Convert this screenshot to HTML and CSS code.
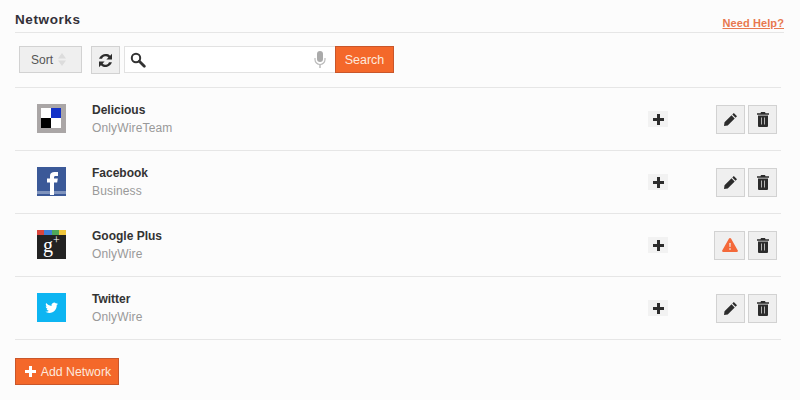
FILE: index.html
```html
<!DOCTYPE html>
<html lang="en">
<head>
  <meta charset="UTF-8">
  <title>Networks</title>
  <link rel="stylesheet" href="styles.css">
</head>
<body>
  <div id="wrapper">
    <div class="page-head">
      <h1>Networks</h1>
      <a class="help" href="#">Need Help?</a>
    </div>

    <div class="toolbar">
      <button class="btn sort">Sort
        <svg class="sort-arrows" width="8" height="13" viewBox="0 0 8 13"><path d="M4 0l4 5.500H0zM4 13L0 7.500h8z"/></svg>
      </button>
      <button class="btn refresh" aria-label="Refresh">
        <svg width="15" height="15" viewBox="0 0 15 15"><path d="M14 .8v5.600H8.400l2-2A3.800 3.800 0 0 0 4 5.800H1.100a6.700 6.700 0 0 1 11-3.100zM1 14.200V8.600h5.600l-2 2A3.800 3.800 0 0 0 11 9.200h2.900a6.700 6.700 0 0 1-11 3.100z"/></svg>
      </button>
      <div class="search">
        <svg class="glass" width="16" height="16" viewBox="0 0 16 16"><circle cx="6" cy="6" r="4.200" fill="none" stroke="#333" stroke-width="2"/><path d="M9.300 9.300l5 5" stroke="#333" stroke-width="2.800" stroke-linecap="round"/></svg>
        <svg class="mic" width="12" height="17" viewBox="0 0 12 17"><rect x="3" y="0" width="6" height="11" rx="3" fill="#aaa"/><path d="M1 7v1.500a5 5 0 0 0 10 0V7" fill="none" stroke="#bbb" stroke-width="1.200"/><path d="M6 13.500V17" stroke="#bbb" stroke-width="1.500"/></svg>
      </div>
      <button class="btn-orange search-btn">Search</button>
    </div>

    <ul class="networks">
      <li class="row">
        <svg class="logo" width="29" height="29" viewBox="0 0 29 29">
          <rect width="29" height="29" fill="#aaa6a6"/>
          <rect x="4" y="4" width="10" height="10" fill="#fff"/>
          <rect x="14" y="4" width="10" height="10" fill="#1432c8"/>
          <rect x="4" y="14" width="10" height="10" fill="#000"/>
          <rect x="14" y="14" width="10" height="10" fill="#fff"/>
        </svg>
        <div class="info">
          <div class="name">Delicious</div>
          <div class="account">OnlyWireTeam</div>
        </div>
        <span class="add"><svg width="11" height="11" viewBox="0 0 11 11"><path d="M4 0h3v4h4v3H7v4H4V7H0V4h4z"/></svg></span>
        <div class="actions">
          <button class="btn square" aria-label="Edit"><svg width="15" height="15" viewBox="0 0 15 15"><path d="M10.800 1l3.200 3.200-1.500 1.500-3.200-3.200zM8.500 3.300l3.200 3.200-7 7L1 14l.5-3.700z"/></svg></button>
          <button class="btn square" aria-label="Delete"><svg width="12" height="15" viewBox="0 0 12 15"><path fill-rule="evenodd" d="M4 0h4l.5 1.300H12v1.500H0V1.300h3.500zM1 3.500h10V14q0 1-1 1H2q-1 0-1-1zM4 5.500v7h.7v-7zM7.300 5.500v7h.7v-7z"/></svg></button>
        </div>
      </li>
      <li class="row">
        <svg class="logo" width="29" height="29" viewBox="0 0 29 29">
          <rect width="29" height="29" fill="#3b5998"/>
          <rect y="24" width="29" height="3" fill="#7f93bd"/>
          <path d="M13 28V15.500h-3V11.500h3V9C13 6 14.800 5 17.500 5H21v4h-2.300c-1.300 0-1.700.6-1.700 1.500v1h3.800l-.6 4H17V28z" fill="#fff"/>
        </svg>
        <div class="info">
          <div class="name">Facebook</div>
          <div class="account">Business</div>
        </div>
        <span class="add"><svg width="11" height="11" viewBox="0 0 11 11"><path d="M4 0h3v4h4v3H7v4H4V7H0V4h4z"/></svg></span>
        <div class="actions">
          <button class="btn square" aria-label="Edit"><svg width="15" height="15" viewBox="0 0 15 15"><path d="M10.800 1l3.200 3.200-1.500 1.500-3.200-3.200zM8.500 3.300l3.200 3.200-7 7L1 14l.5-3.700z"/></svg></button>
          <button class="btn square" aria-label="Delete"><svg width="12" height="15" viewBox="0 0 12 15"><path fill-rule="evenodd" d="M4 0h4l.5 1.300H12v1.500H0V1.300h3.500zM1 3.500h10V14q0 1-1 1H2q-1 0-1-1zM4 5.500v7h.7v-7zM7.300 5.500v7h.7v-7z"/></svg></button>
        </div>
      </li>
      <li class="row">
        <div class="logo gplus">
          <div class="gplus-bar"><i class="c1"></i><i class="c2"></i><i class="c3"></i><i class="c4"></i></div>
          <div class="gplus-text">g<sup>+</sup></div>
        </div>
        <div class="info">
          <div class="name">Google Plus</div>
          <div class="account">OnlyWire</div>
        </div>
        <span class="add"><svg width="11" height="11" viewBox="0 0 11 11"><path d="M4 0h3v4h4v3H7v4H4V7H0V4h4z"/></svg></span>
        <div class="actions">
          <button class="btn square wide" aria-label="Warning"><svg width="16" height="14" viewBox="0 0 16 14"><path fill-rule="evenodd" fill="#f4693a" d="M8 0q.7 0 1 .6l6.800 11.800q.5 1.200-.8 1.600H1q-1.300-.4-.8-1.600L7 .6Q7.300 0 8 0zM7.300 5l.2 4h1l.2-4zM7.300 10.200v1.600h1.400v-1.600z"/></svg></button>
          <button class="btn square" aria-label="Delete"><svg width="12" height="15" viewBox="0 0 12 15"><path fill-rule="evenodd" d="M4 0h4l.5 1.300H12v1.500H0V1.300h3.500zM1 3.500h10V14q0 1-1 1H2q-1 0-1-1zM4 5.500v7h.7v-7zM7.300 5.500v7h.7v-7z"/></svg></button>
        </div>
      </li>
      <li class="row">
        <svg class="logo" width="29" height="29" viewBox="0 0 29 29">
          <rect width="29" height="29" fill="#0db5f2"/>
          <path transform="translate(3.800 3.800) scale(.75)" d="M23 9.300c-.7.300-1.300.5-2 .6.700-.4 1.300-1.100 1.500-1.900-.7.400-1.400.7-2.200.9a3.500 3.500 0 0 0-6 3.200C11.400 12 8.800 10.600 7.100 8.400c-.9 1.600-.4 3.600 1.100 4.600-.6 0-1.100-.2-1.600-.4 0 1.700 1.200 3.100 2.800 3.400-.5.100-1 .2-1.600.1.500 1.400 1.800 2.400 3.300 2.400A7 7 0 0 1 6 20c1.500 1 3.400 1.500 5.300 1.500 6.500 0 10.100-5.400 9.900-10.300.7-.5 1.300-1.100 1.800-1.900z" fill="#fff"/>
        </svg>
        <div class="info">
          <div class="name">Twitter</div>
          <div class="account">OnlyWire</div>
        </div>
        <span class="add"><svg width="11" height="11" viewBox="0 0 11 11"><path d="M4 0h3v4h4v3H7v4H4V7H0V4h4z"/></svg></span>
        <div class="actions">
          <button class="btn square" aria-label="Edit"><svg width="15" height="15" viewBox="0 0 15 15"><path d="M10.800 1l3.200 3.200-1.500 1.500-3.200-3.200zM8.500 3.300l3.200 3.200-7 7L1 14l.5-3.700z"/></svg></button>
          <button class="btn square" aria-label="Delete"><svg width="12" height="15" viewBox="0 0 12 15"><path fill-rule="evenodd" d="M4 0h4l.5 1.300H12v1.500H0V1.300h3.500zM1 3.500h10V14q0 1-1 1H2q-1 0-1-1zM4 5.500v7h.7v-7zM7.300 5.500v7h.7v-7z"/></svg></button>
        </div>
      </li>
    </ul>

    <button class="btn-orange add-network">
      <svg width="11" height="11" viewBox="0 0 11 11"><path d="M4 0h3v4h4v3H7v4H4V7H0V4h4z"/></svg>
      Add Network
    </button>
  </div>
</body>
</html>
```

FILE: styles.css
```css
*, *::before, *::after { box-sizing: border-box; }
html, body {
  margin: 0;
  padding: 0;
  height: 100%;
  font-family: 'Liberation Sans', Arial, sans-serif;
  background: #fcfcfc;
  overflow: hidden;
}
#wrapper {
  height: 100%;
  padding-left: 15px;
  display: flex;
  flex-direction: column;
  align-items: flex-start;
}
.page-head {
  width: 769px;
  height: 33px;
  padding-top: 12px;
  display: flex;
  justify-content: space-between;
  border-bottom: 1px solid #e6e6e6;
}
.page-head h1 {
  margin: 0;
  font-size: 13.500px;
  line-height: 16px;
  font-weight: bold;
  letter-spacing: 0.6px;
  color: #333038;
}
.help {
  margin-top: 4px;
  font-size: 11px;
  line-height: 14px;
  height: 16px;
  font-weight: bold;
  letter-spacing: 0.1px;
  color: #e8784f;
  text-decoration: underline;
}
.toolbar {
  width: 766px;
  height: 55px;
  padding: 13px 0 0 4px;
  display: flex;
  align-items: flex-start;
  border-bottom: 1px solid #e6e6e6;
}
.btn {
  display: flex;
  align-items: center;
  justify-content: center;
  padding: 0;
  background: #efefef;
  border: 1px solid #d2d2d2;
  color: #333;
  font-family: inherit;
}
.btn svg { fill: #2c2c2c; }
.sort {
  width: 63px;
  height: 27px;
  margin-right: 9px;
  padding-right: 4px;
  gap: 5px;
  font-size: 12px;
  color: #555;
}
.btn .sort-arrows { fill: #dcdcdc; }
.refresh {
  width: 29px;
  height: 28px;
  margin-right: 4px;
}
.search {
  width: 211px;
  height: 27px;
  padding: 0 9px 0 5px;
  display: flex;
  align-items: center;
  justify-content: space-between;
  background: #fff;
  border: 1px solid #e2e2e2;
  border-right: none;
}
.btn-orange {
  display: flex;
  align-items: center;
  justify-content: center;
  background: #f4682a;
  border: 1px solid #c9562a;
  color: #fff;
  font-family: inherit;
  font-size: 12px;
  padding: 0;
}
.search-btn {
  width: 59px;
  height: 27px;
  font-size: 12.500px;
  color: #fde8dc;
}
.networks {
  width: 766px;
  margin: 0;
  padding: 0;
  list-style: none;
}
.row {
  height: 63px;
  display: flex;
  align-items: center;
  padding-left: 22px;
  border-bottom: 1px solid #e6e6e6;
}
.logo {
  flex: none;
  width: 29px;
  height: 29px;
  margin-bottom: 1px;
  display: block;
}
.gplus {
  display: flex;
  flex-direction: column;
  background: #222;
}
.gplus-bar {
  height: 5px;
  display: flex;
}
.gplus-bar i { flex: 1; }
.gplus-bar .c1 { background: #d9453d; }
.gplus-bar .c2 { background: #3f7fd8; }
.gplus-bar .c3 { background: #4fa85a; }
.gplus-bar .c4 { background: #f0c63c; }
.gplus-text {
  text-align: center;
  font-family: 'Liberation Serif', serif;
  font-size: 20px;
  line-height: 21px;
  color: #fff;
}
.gplus-text sup {
  font-size: 12px;
  line-height: 0;
}
.info {
  margin-left: 26px;
  width: 556px;
  flex: none;
}
.name {
  font-size: 12px;
  line-height: 18px;
  font-weight: bold;
  color: #333;
}
.account {
  font-size: 12px;
  line-height: 18px;
  letter-spacing: 0.15px;
  color: #999;
}
.add {
  width: 20px;
  height: 16px;
  flex: none;
  display: flex;
  align-items: center;
  justify-content: center;
  background: #f2f2f2;
}
.add svg { fill: #2c2c2c; }
.actions {
  margin-left: auto;
  margin-right: 4px;
  display: flex;
  gap: 3px;
}
.square {
  width: 29px;
  height: 29px;
}
.square.wide { width: 31px; }
.add-network {
  margin-top: 18px;
  width: 104px;
  height: 27px;
  padding-left: 2px;
  gap: 5px;
  font-size: 12.300px;
  color: #fde8dc;
}
.add-network svg { fill: #fff; }
```
